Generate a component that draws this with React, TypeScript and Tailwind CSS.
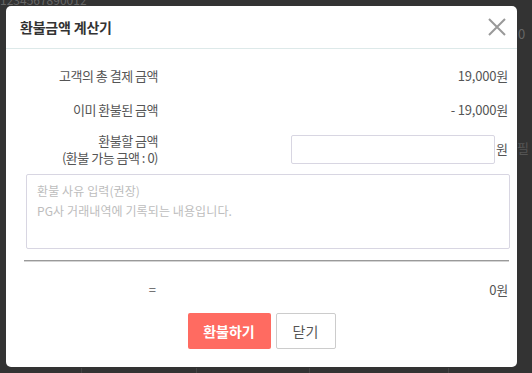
import React from "react";

const font = { fontFamily: '"Noto Sans CJK KR", "Noto Sans", sans-serif' };

export default function App() {
  return (
    <div
      className="relative w-[532px] h-[373px] bg-[#333333] overflow-hidden"
      style={font}
    >
      {/* faint page behind */}
      <div className="absolute left-[0px] top-[-9px] text-[12px] text-[#666]">1234567890012</div>
      <div className="absolute left-[518px] top-[24px] text-[13px] text-[#666]">0</div>
      <div className="absolute left-[517px] top-[138px] text-[13px] text-[#555]">필</div>
      <div className="absolute left-[81px] top-[368px] w-px h-[6px] bg-[#444]" />
      <div className="absolute left-[196px] top-[368px] w-px h-[6px] bg-[#444]" />
      <div className="absolute left-[309px] top-[368px] w-px h-[6px] bg-[#444]" />
      <div className="absolute left-[448px] top-[368px] w-px h-[6px] bg-[#444]" />

      <div className="absolute left-[6px] top-[6px] w-[511px] h-[361px] bg-white rounded-[5px] flex flex-col">
        {/* header */}
        <div className="h-[43px] flex items-center justify-between pl-[14px] pr-[10px] border-b border-[#dde9e9]">
          <div className="text-[14px] font-bold text-[#333] tracking-[-0.2px]">환불금액 계산기</div>
          <svg width="20" height="20" viewBox="0 0 20 20">
            <path d="M2 2 L18 18 M18 2 L2 18" stroke="#999" strokeWidth="2" fill="none" />
          </svg>
        </div>

        {/* body */}
        <div className="flex flex-col pl-[20px] pr-[7px] pt-[10px] text-[13px] text-[#555]">
          <div className="h-[34px] flex items-center">
            <div className="w-[132px] text-right tracking-[-0.5px]">고객의 총 결제 금액</div>
            <div className="flex-1 text-right pr-[2px] tracking-[-0.2px]">19,000원</div>
          </div>
          <div className="h-[34px] flex items-center">
            <div className="w-[132px] text-right tracking-[-0.5px]">이미 환불된 금액</div>
            <div className="flex-1 text-right pr-[2px] tracking-[-0.2px]">- 19,000원</div>
          </div>
          <div className="mt-[4px] h-[36px] flex items-center">
            <div className="w-[132px] text-right leading-[17px] tracking-[-0.5px]">
              <div>환불할 금액</div>
              <div>(환불 가능 금액 : 0)</div>
            </div>
            <div className="flex-1 flex items-center justify-end pr-[2px]">
              <input
                type="text"
                className="w-[204px] h-[29px] border border-[#d8d6e2] rounded-[2px] outline-none px-2"
              />
              <span className="ml-[1px]">원</span>
            </div>
          </div>
          <textarea
            className="mt-[7px] h-[75px] w-full border border-[#d8d6e2] rounded-[2px] px-[10px] py-[6px] leading-[20px] text-[12px] tracking-[0.1px] resize-none outline-none placeholder:text-[#bdbdbd]"
            placeholder={"환불 사유 입력(권장)\nPG사 거래내역에 기록되는 내용입니다."}
          />
          <div className="mt-[11px] -ml-[2px] mr-[1px] h-[2px] bg-[#9a9a9a] border-b border-[#d4d4d4]" />
          <div className="mt-[18px] h-[20px] flex items-center">
            <div className="w-[132px] text-right pr-[2px]">=</div>
            <div className="flex-1 text-right pr-[2px] tracking-[-0.2px]">0원</div>
          </div>
        </div>

        <div className="mt-[13px] flex justify-center gap-[5px]">
          <button className="w-[83px] h-[36px] bg-[#ff6b61] rounded-[2px] text-white font-bold text-[14px]">
            환불하기
          </button>
          <button className="w-[60px] h-[36px] bg-white border border-[#cccccc] rounded-[2px] text-[#555] text-[14px]">
            닫기
          </button>
        </div>
      </div>
    </div>
  );
}
